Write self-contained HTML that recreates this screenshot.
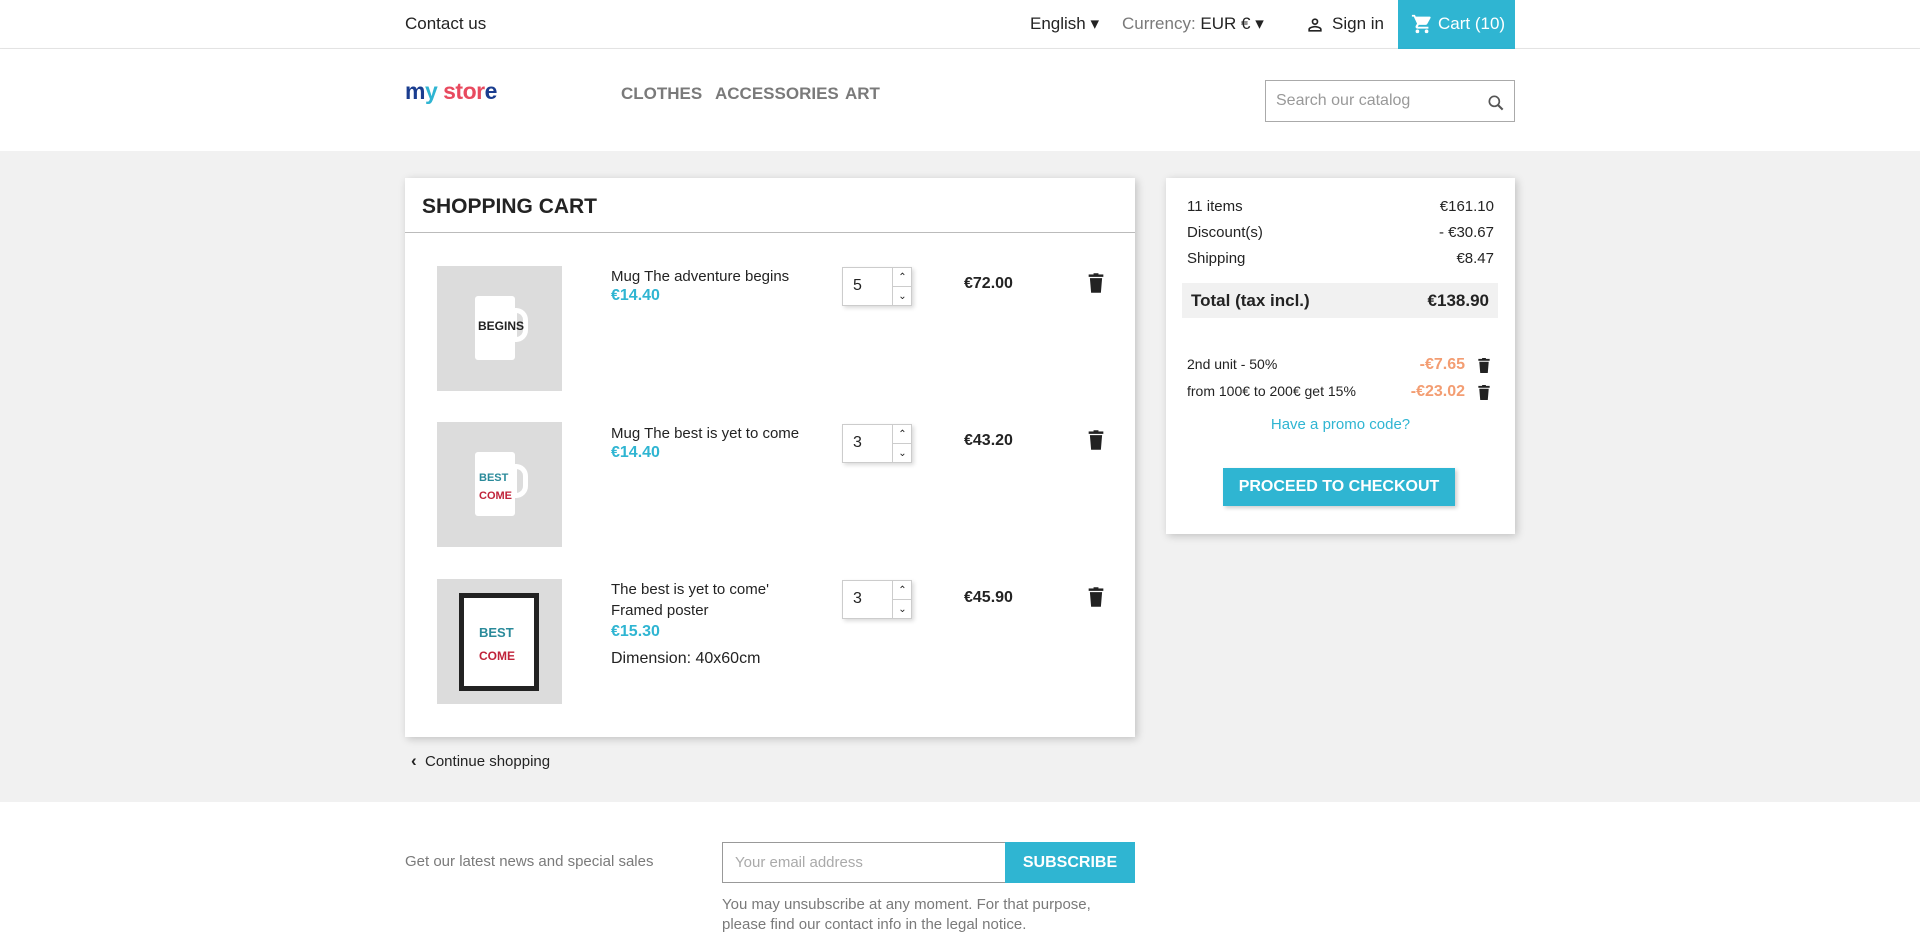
<!DOCTYPE html>
<html><head><meta charset="utf-8"><style>
*{box-sizing:border-box;margin:0;padding:0}
body{width:1920px;height:937px;overflow:hidden;font-family:"Liberation Sans",sans-serif;color:#232323;background:#fff;position:relative}
.a{position:absolute;white-space:nowrap}
.top{position:absolute;left:0;top:0;width:1920px;height:49px;border-bottom:1px solid #e6e6e6;font-size:17px}
.hdr{position:absolute;left:0;top:49px;width:1920px;height:102px;background:#fff;box-shadow:0 2px 4px rgba(0,0,0,.12)}
.nav{font-weight:bold;font-size:17px;color:#7a7a7a}
.gray{position:absolute;left:0;top:151px;width:1920px;height:651px;background:#f1f1f1}
.card{position:absolute;background:#fff;box-shadow:2px 2px 8px rgba(0,0,0,.2)}
.img{position:absolute;left:437px;width:125px;height:125px;background:#dcdcdc}
.qty{position:absolute;left:842px;width:70px;height:39px;border:1px solid #ccc;background:#fff;box-shadow:2px 2px 4px rgba(0,0,0,.15)}
.qty span{position:absolute;left:10px;top:9px;font-size:16px}
.qty i{position:absolute;left:49px;width:20px;height:19px;border-left:1px solid #ccc;font-style:normal;font-size:10px;text-align:center;line-height:19px}
.nm{font-size:15px;left:611px}
.pr{font-size:16px;font-weight:bold;color:#2fb5d2;left:611px}
.tot{font-size:16px;font-weight:bold;left:964px}
.sm{font-size:15px}
</style></head><body>
<div class="top">
<div class="a" style="left:405px;top:14px">Contact us</div>
<div class="a" style="left:1030px;top:14px">English ▾</div>
<div class="a" style="left:1122px;top:14px"><span style="color:#7a7a7a">Currency:</span> EUR € ▾</div>
<svg class="a" style="left:1305px;top:15px" width="20" height="20" viewBox="0 0 24 24"><path d="M12 4a4 4 0 110 8 4 4 0 010-8zm0 2a2 2 0 100 4 2 2 0 000-4zm0 7c2.7 0 8 1.3 8 4v3H4v-3c0-2.7 5.3-4 8-4zm0 2c-3 0-6 1.5-6 2v1h12v-1c0-.5-3-2-6-2z" fill="#232323"/></svg>
<div class="a" style="left:1332px;top:14px">Sign in</div>
<div class="a" style="left:1398px;top:0;width:117px;height:49px;background:#2fb5d2;color:#fff">
<svg class="a" style="left:13px;top:13px" width="22" height="22" viewBox="0 0 24 24"><path d="M7 18a2 2 0 100 4 2 2 0 000-4zM1 2v2h2l3.6 7.6-1.4 2.4A2 2 0 007 17h12v-2H7.4l1.1-2h7.5a2 2 0 001.7-1l3.6-6.5A1 1 0 0020.5 4H5.2l-.9-2H1zm16 16a2 2 0 100 4 2 2 0 000-4z" fill="#fff"/></svg>
<div class="a" style="left:40px;top:14px">Cart (10)</div></div>
</div>
<div class="hdr">
<div class="a" style="left:405px;top:29px;font-size:23px;font-weight:bold;letter-spacing:-0.5px"><span style="color:#1a3d8f">m</span><span style="color:#2fb5d2">y</span> <span style="color:#e84a5f">sto</span><span style="color:#e84a5f">r</span><span style="color:#1a3d8f">e</span></div>
<div class="a nav" style="left:621px;top:35px">CLOTHES</div>
<div class="a nav" style="left:715px;top:35px">ACCESSORIES</div>
<div class="a nav" style="left:845px;top:35px">ART</div>
<div class="a" style="left:1265px;top:31px;width:250px;height:42px;border:1px solid #aaa;background:#fff">
<div class="a" style="left:10px;top:11px;font-size:16px;color:#999">Search our catalog</div>
<svg class="a" style="left:220px;top:12px" width="20" height="20" viewBox="0 0 24 24"><circle cx="10" cy="10" r="6" stroke="#555" stroke-width="2" fill="none"/><path d="M14.5 14.5L20 20" stroke="#555" stroke-width="2.5"/></svg></div>
</div>
<div class="gray"></div>
<div class="card" style="left:405px;top:178px;width:730px;height:559px">
<div class="a" style="left:17px;top:17px;font-size:21px;font-weight:bold">SHOPPING CART</div>
<div class="a" style="left:0;top:54px;width:730px;height:1px;background:#bbb"></div>
</div>
<div class="img" style="top:266px"><div class="a" style="left:38px;top:30px;width:40px;height:64px;background:#fff;border-radius:3px"></div><div class="a" style="left:75px;top:42px;width:16px;height:34px;border:5px solid #fff;border-radius:0 12px 12px 0"></div><div class="a" style="left:41px;top:53px;font-size:12px;font-weight:bold;color:#222">BEGINS</div></div>
<div class="img" style="top:422px"><div class="a" style="left:38px;top:30px;width:40px;height:64px;background:#fff;border-radius:3px"></div><div class="a" style="left:75px;top:42px;width:16px;height:34px;border:5px solid #fff;border-radius:0 12px 12px 0"></div><div class="a" style="left:42px;top:50px;font-size:11px;font-weight:bold;color:#2a8a9a">BEST</div><div class="a" style="left:42px;top:68px;font-size:11px;font-weight:bold;color:#c0233a">COME</div></div>
<div class="img" style="top:579px"><div class="a" style="left:22px;top:14px;width:80px;height:98px;background:#fff;border:5px solid #222"></div><div class="a" style="left:42px;top:46px;font-size:13px;font-weight:bold;color:#2a8a9a">BEST</div><div class="a" style="left:42px;top:70px;font-size:12px;font-weight:bold;color:#c0233a">COME</div></div>
<div class="a nm" style="top:268px">Mug The adventure begins</div><div class="a pr" style="top:287px">€14.40</div>
<div class="a nm" style="top:425px">Mug The best is yet to come</div><div class="a pr" style="top:444px">€14.40</div>
<div class="a nm" style="top:581px">The best is yet to come'</div><div class="a nm" style="top:602px">Framed poster</div><div class="a pr" style="top:623px">€15.30</div><div class="a nm" style="top:650px;font-size:16px">Dimension: 40x60cm</div>
<div class="qty" style="top:267px"><span>5</span><i style="top:0;border-bottom:1px solid #ccc">⌃</i><i style="top:19px">⌄</i></div>
<div class="qty" style="top:424px"><span>3</span><i style="top:0;border-bottom:1px solid #ccc">⌃</i><i style="top:19px">⌄</i></div>
<div class="qty" style="top:580px"><span>3</span><i style="top:0;border-bottom:1px solid #ccc">⌃</i><i style="top:19px">⌄</i></div>
<div class="a tot" style="top:275px">€72.00</div><div class="a tot" style="top:432px">€43.20</div><div class="a tot" style="top:589px">€45.90</div>
<svg class="a" style="left:1087px;top:272px" width="18" height="22" viewBox="0 0 14 18"><path d="M5 1h4v2H5zM2 5h10l-1 12H3z" fill="#222"/><rect x="1" y="2" width="12" height="2" fill="#222"/></svg>
<svg class="a" style="left:1087px;top:429px" width="18" height="22" viewBox="0 0 14 18"><path d="M5 1h4v2H5zM2 5h10l-1 12H3z" fill="#222"/><rect x="1" y="2" width="12" height="2" fill="#222"/></svg>
<svg class="a" style="left:1087px;top:586px" width="18" height="22" viewBox="0 0 14 18"><path d="M5 1h4v2H5zM2 5h10l-1 12H3z" fill="#222"/><rect x="1" y="2" width="12" height="2" fill="#222"/></svg>
<div class="a" style="left:411px;top:751px;font-size:15px"><span style="font-weight:bold;font-size:17px">‹</span>&nbsp; Continue shopping</div>
<div class="card" style="left:1166px;top:178px;width:349px;height:356px">
<div class="a sm" style="left:21px;top:20px">11 items</div><div class="a sm" style="right:21px;top:20px">€161.10</div>
<div class="a sm" style="left:21px;top:46px">Discount(s)</div><div class="a sm" style="right:21px;top:46px">- €30.67</div>
<div class="a sm" style="left:21px;top:72px">Shipping</div><div class="a sm" style="right:21px;top:72px">€8.47</div>
<div class="a" style="left:16px;top:105px;width:316px;height:35px;background:#f1f1f1"><div class="a" style="left:9px;top:8px;font-size:17px;font-weight:bold">Total (tax incl.)</div><div class="a" style="right:9px;top:8px;font-size:17px;font-weight:bold">€138.90</div></div>
<div class="a" style="left:21px;top:178px;font-size:14px">2nd unit - 50%</div><div class="a" style="right:50px;top:178px;font-size:16px;font-weight:bold;color:#f39d72">-€7.65</div>
<div class="a" style="left:21px;top:205px;font-size:14px">from 100€ to 200€ get 15%</div><div class="a" style="right:50px;top:205px;font-size:16px;font-weight:bold;color:#f39d72">-€23.02</div>
<svg class="a" style="left:311px;top:179px" width="14" height="17" viewBox="0 0 14 18"><path d="M5 1h4v2H5zM2 5h10l-1 12H3z" fill="#222"/><rect x="1" y="2" width="12" height="2" fill="#222"/></svg>
<svg class="a" style="left:311px;top:206px" width="14" height="17" viewBox="0 0 14 18"><path d="M5 1h4v2H5zM2 5h10l-1 12H3z" fill="#222"/><rect x="1" y="2" width="12" height="2" fill="#222"/></svg>
<div class="a" style="left:0;width:349px;text-align:center;top:238px;font-size:15px;color:#2fb5d2">Have a promo code?</div>
<div class="a" style="left:57px;top:290px;width:232px;height:38px;background:#2fb5d2;color:#fff;font-weight:bold;font-size:16px;text-align:center;line-height:38px;box-shadow:2px 2px 4px rgba(0,0,0,.2)">PROCEED TO CHECKOUT</div>
</div>
<div class="a" style="left:405px;top:853px;font-size:15px;color:#7a7a7a">Get our latest news and special sales</div>
<div class="a" style="left:722px;top:842px;width:284px;height:41px;border:1px solid #999;background:#fff"><div class="a" style="left:12px;top:11px;font-size:15px;color:#aaa">Your email address</div></div>
<div class="a" style="left:1005px;top:842px;width:130px;height:41px;background:#2fb5d2;color:#fff;font-weight:bold;font-size:16px;text-align:center;line-height:41px">SUBSCRIBE</div>
<div class="a" style="left:722px;top:895px;font-size:15px;color:#7a7a7a;line-height:20px">You may unsubscribe at any moment. For that purpose,<br>please find our contact info in the legal notice.</div>
</body></html>
